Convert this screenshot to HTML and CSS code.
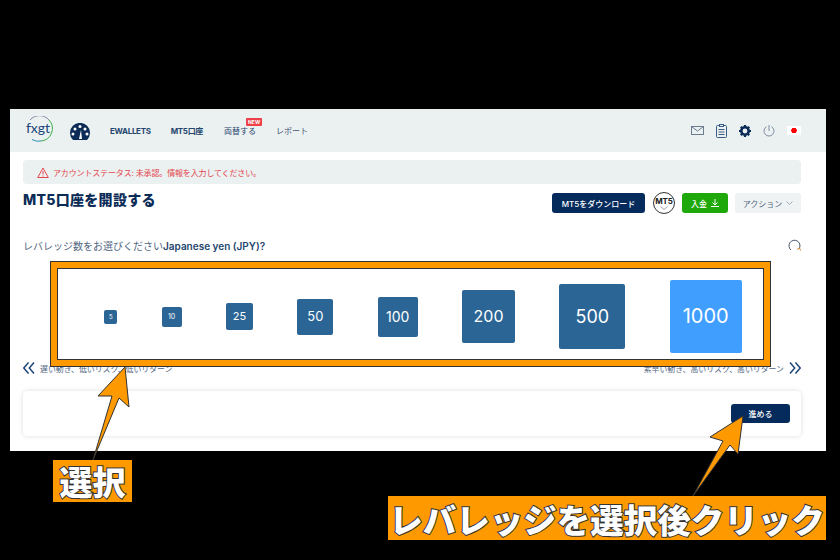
FILE: index.html
```html
<!DOCTYPE html>
<html lang="ja">

<head>
    <meta charset="UTF-8">
    <meta name="viewport" content="width=device-width, initial-scale=1.0">
    <title>MT5口座を開設する</title>
    <link rel="stylesheet" href="styles.css">
</head>

<body>
    <div class="page">
        <header class="nav">
            <div class="logo">
                <svg class="logo-ring" width="28" height="26" viewBox="0 0 28 26" fill="none">
                    <path d="M5 4A12.500 12.500 0 0 1 24 4" stroke="#7f8fa6" stroke-width="1"/>
                    <path d="M24 4A12.500 12.500 0 0 1 16 25" stroke="#3fae49" stroke-width="1"/>
                    <path d="M16 25A12.500 12.500 0 0 1 7 23.500" stroke="#2a8fb8" stroke-width="1"/>
                </svg>
                <span class="logo-text">fxgt</span>
            </div>
            <svg class="gauge" width="20" height="17" viewBox="0 0 20 17">
                <path d="M3 17A10 10 0 1 1 17 17Z" fill="#0b2c56"/>
                <circle cx="10" cy="3.500" r="1.500" fill="#fff"/>
                <circle cx="5" cy="6" r="1.500" fill="#fff"/>
                <circle cx="15" cy="6" r="1.500" fill="#fff"/>
                <circle cx="3" cy="11" r="1.500" fill="#fff"/>
                <circle cx="17" cy="11" r="1.500" fill="#fff"/>
                <path d="M9 16L11 7L12 16Z" fill="#fff"/>
            </svg>
            <a class="nav-link nav-bold" href="#">EWALLETS</a>
            <a class="nav-link nav-bold" href="#">MT5口座</a>
            <a class="nav-link nav-new" href="#">両替する<span class="badge">NEW</span></a>
            <a class="nav-link nav-light" href="#">レポート</a>
            <div class="nav-icons">
                <svg width="13" height="9" viewBox="0 0 13 9" fill="none" stroke="#6b7c90">
                    <rect x="0.500" y="0.500" width="12" height="8"/>
                    <path d="M0.500 0.500L6.500 5L12.500 0.500"/>
                </svg>
                <svg width="11" height="14" viewBox="0 0 11 14" fill="none" stroke="#3a5d85">
                    <rect x="0.500" y="1.500" width="10" height="12" rx="1"/>
                    <rect x="3.500" y="0.500" width="4" height="2" fill="#ebf0f0"/>
                    <path d="M2.500 5.500H8.500M2.500 8H8.500M2.500 10.500H8.500"/>
                </svg>
                <svg width="12" height="12" viewBox="0 0 12 12">
                    <circle cx="6" cy="6" r="3.700" fill="none" stroke="#0b2c56" stroke-width="2.600"/>
                    <path d="M6 0V2M6 10V12M0 6H2M10 6H12M1.800 1.800L3.200 3.200M8.800 8.800L10.200 10.200M1.800 10.200L3.200 8.800M8.800 3.200L10.200 1.800" stroke="#0b2c56" stroke-width="2.200"/>
                </svg>
                <svg width="12" height="12" viewBox="0 0 12 12" fill="none" stroke="#7f90a2">
                    <path d="M3.500 1.700A5 5 0 1 0 8.500 1.700"/>
                    <path d="M6 0V6"/>
                </svg>
                <span class="flag"></span>
            </div>
        </header>

        <main class="content">
            <div class="alert">
                <svg width="12" height="11" viewBox="0 0 12 11" fill="none" stroke="#e4464e">
                    <path d="M6 1L11.300 10.500H0.700Z"/>
                    <path d="M6 4V7.500M6 8.500V9.500"/>
                </svg>
                <span>アカウントステータス: 未承認。情報を入力してください。</span>
            </div>

            <div class="title-row">
                <h1>MT5口座を開設する</h1>
                <div class="actions">
                    <button class="btn btn-navy btn-download">MT5をダウンロード</button>
                    <div class="mt5-circle">
                        <span>MT5</span>
                        <svg width="8" height="4" viewBox="0 0 8 4" fill="none" stroke="#9aa5b1"><path d="M0.500 0.500L4 3.500L7.500 0.500"/></svg>
                    </div>
                    <button class="btn btn-green">入金
                        <svg width="8" height="8" viewBox="0 0 8 8" fill="none" stroke="#fff"><path d="M4 0V5.500M1.500 3.500L4 6L6.500 3.500M0 7.500H8"/></svg>
                    </button>
                    <button class="btn btn-gray">アクション
                        <svg width="7" height="4" viewBox="0 0 7 4" fill="none" stroke="#a5b0ba"><path d="M0.500 0.500L3.500 3.500L6.500 0.500"/></svg>
                    </button>
                </div>
            </div>

            <div class="question">
                <p>レバレッジ数をお選びください<b>Japanese yen (JPY)?</b></p>
                <svg width="13" height="13" viewBox="0 0 13 13" fill="none" stroke="#44566c">
                    <path d="M11.500 9A5.500 5.500 0 1 0 3 11"/>
                    <path d="M9 10.500L11.500 9L12.500 11.500" stroke="#c9852f"/>
                </svg>
            </div>

            <div class="leverage">
                <button class="lev lev-5">5</button>
                <button class="lev lev-10">10</button>
                <button class="lev lev-25">25</button>
                <button class="lev lev-50">50</button>
                <button class="lev lev-100">100</button>
                <button class="lev lev-200">200</button>
                <button class="lev lev-500">500</button>
                <button class="lev lev-1000 active">1000</button>
            </div>

            <div class="hints">
                <div class="hint">
                    <svg width="12" height="12" viewBox="0 0 12 12" fill="none" stroke="#20467a" stroke-width="1.500"><path d="M5.500 0.500L0.800 6L5.500 11.500M11 0.500L6.300 6L11 11.500"/></svg>
                    <span>遅い動き、低いリスク、低いリターン</span>
                </div>
                <div class="hint">
                    <span>素早い動き、高いリスク、高いリターン</span>
                    <svg width="12" height="12" viewBox="0 0 12 12" fill="none" stroke="#20467a" stroke-width="1.500"><path d="M1 0.500L5.700 6L1 11.500M6.500 0.500L11.200 6L6.500 11.500"/></svg>
                </div>
            </div>

            <div class="card">
                <button class="btn btn-navy btn-next">進める</button>
            </div>
        </main>
    </div>

    <!-- annotations on top of the screenshot -->
    <div class="frame"></div>
    <svg class="arrows" width="840" height="560" viewBox="0 0 840 560">
        <path d="M125 367L129 407L119 398L93 460L112 396L98 396Z" fill="#ff9900" stroke="#333" stroke-width="1"/>
        <path d="M743 416L738 454L730 445L693 496L723 441L710 437Z" fill="#ff9900" stroke="#333" stroke-width="1"/>
    </svg>
    <div class="label label-select">選択</div>
    <div class="label label-click">レバレッジを選択後クリック</div>
</body>

</html>
```

FILE: styles.css
```css
* {
    box-sizing: border-box;
}

html,
body {
    margin: 0;
    padding: 0;
}

body {
    position: relative;
    width: 840px;
    height: 560px;
    overflow: hidden;
    background: #000;
    font-family: 'Inter', 'Noto Sans CJK JP', sans-serif;
    color: #0b2c56;
}

button {
    border: none;
    font-family: inherit;
    padding: 0;
}

.page {
    width: 816px;
    height: 342px;
    margin: 109px 0 0 10px;
    background: #fff;
}

/* nav */
.nav {
    height: 43px;
    background: #ebf0f0;
    display: flex;
    align-items: center;
    padding-left: 15px;
}

.logo {
    position: relative;
    width: 28px;
    height: 26px;
    margin-top: -3px;
    display: flex;
    align-items: center;
    justify-content: center;
}

.logo-ring {
    position: absolute;
    left: 0;
    top: 0;
}

.logo-text {
    font-family: 'Lato', sans-serif;
    font-size: 14px;
    color: #20467a;
    margin-left: -2px;
    margin-top: -3px;
}

.gauge {
    margin-left: 17px;
    margin-right: 20px;
    margin-top: 2px;
}

.nav-link {
    font-size: 8px;
    text-decoration: none;
    color: #24466e;
    margin-right: 20px;
    white-space: nowrap;
}

.nav-bold {
    font-weight: 700;
    letter-spacing: -0.3px;
}

.nav-new {
    position: relative;
    font-weight: 400;
    margin-left: 1px;
}

.nav-light {
    font-weight: 400;
    color: #3f5571;
}

.badge {
    position: absolute;
    left: 22px;
    top: -7px;
    background: #ed4048;
    color: #fff;
    font-size: 5px;
    font-weight: 700;
    line-height: 8px;
    padding: 0 2px;
    border-radius: 1px;
}

.nav-icons {
    margin-left: auto;
    display: flex;
    align-items: center;
    gap: 12px;
    padding-right: 25px;
}

.flag {
    width: 14px;
    height: 9px;
    background: radial-gradient(circle, #f00 0 2.500px, #fff 3px);
}

/* main */
.content {
    padding: 8px 25px 0 13px;
}

.alert {
    height: 24px;
    background: #ebf0f0;
    border-radius: 4px;
    display: flex;
    align-items: center;
    gap: 4px;
    padding-left: 14px;
    font-size: 8px;
    letter-spacing: -0.15px;
    color: #e4464e;
}

.title-row {
    display: flex;
    justify-content: space-between;
    align-items: flex-start;
    margin-top: 8px;
    height: 22px;
}

h1 {
    margin: 0;
    font-size: 14px;
    line-height: 16px;
    font-weight: 800;
    letter-spacing: 0.3px;
    color: #0b2c56;
}

.actions {
    display: flex;
    align-items: center;
    height: 22px;
}

.btn {
    height: 20px;
    border-radius: 3px;
    font-size: 8px;
    font-weight: 500;
    display: flex;
    align-items: center;
    justify-content: center;
    gap: 4px;
}

.btn-navy {
    background: #042b5c;
    color: #fff;
}

.btn-download {
    width: 93px;
}

.mt5-circle {
    width: 22px;
    height: 22px;
    margin: 0 7px 0 8px;
    border: 1px solid #333;
    border-radius: 50%;
    font-size: 8px;
    font-weight: 700;
    color: #222;
    letter-spacing: -0.2px;
    display: flex;
    flex-direction: column;
    align-items: center;
    justify-content: center;
    line-height: 9px;
    padding-top: 1px;
}

.btn-green {
    width: 46px;
    background: #1fa80a;
    color: #fff;
}

.btn-gray {
    width: 66px;
    margin-left: 7px;
    background: #eff3f3;
    color: #51667f;
    font-weight: 400;
}

.question {
    display: flex;
    justify-content: space-between;
    align-items: center;
    height: 16px;
    margin-top: 23px;
    font-size: 10px;
    color: #51667f;
}

.question p {
    margin: 0;
}

.question b {
    color: #24466e;
    font-weight: 600;
}

.leverage {
    display: flex;
    align-items: center;
    gap: 44.350px;
    height: 73px;
    margin-top: 27px;
    padding-left: 81.300px;
}

.lev {
    background: #2b6595;
    color: #fff;
    border-radius: 2px;
    flex-shrink: 0;
    display: flex;
    align-items: center;
    justify-content: center;
    padding-bottom: 1px;
}

.lev-5 { width: 13px; height: 14px; font-size: 6px; border-radius: 2px; }
.lev-10 { width: 20px; height: 20px; font-size: 7px; }
.lev-25 { width: 27px; height: 27px; font-size: 11px; }
.lev-50 { width: 36px; height: 36px; font-size: 13px; }
.lev-100 { width: 40px; height: 40px; font-size: 14px; }
.lev-200 { width: 53px; height: 53px; font-size: 16px; }
.lev-500 { width: 66px; height: 65px; font-size: 18px; }
.lev-1000 { width: 72px; height: 73px; font-size: 20px; }

.lev.active {
    background: #409eff;
}

.hints {
    display: flex;
    justify-content: space-between;
    height: 14px;
    margin-top: 8px;
    font-size: 7.900px;
    color: #51667f;
}

.hint {
    display: flex;
    align-items: center;
    gap: 5px;
}

.card {
    height: 45px;
    margin-top: 16px;
    background: #fff;
    border-radius: 4px;
    box-shadow: 0 0 5px rgba(0, 0, 0, 0.14);
    display: flex;
    align-items: center;
    justify-content: flex-end;
    padding-right: 11px;
}

.btn-next {
    width: 59px;
    height: 19px;
}

/* annotations */
.frame {
    position: absolute;
    left: 50px;
    top: 261px;
    width: 721px;
    height: 106px;
    background: transparent;
    border: 7px solid #ff9900;
    outline: 1px solid #333;
    outline-offset: -1px;
    box-shadow: inset 0 0 0 1px #333;
}

.arrows {
    position: absolute;
    left: 0;
    top: 0;
}

.label {
    position: absolute;
    background: #ff9900;
    color: #fff;
    font-family: 'Noto Sans CJK JP', sans-serif;
    font-weight: 900;
    white-space: nowrap;
    display: flex;
    align-items: center;
    justify-content: center;
    -webkit-text-stroke: 2px #333;
    paint-order: stroke fill;
}

.label-select {
    left: 53px;
    top: 460px;
    width: 79px;
    height: 42px;
    font-size: 33px;
}

.label-click {
    left: 388px;
    top: 496px;
    width: 438px;
    height: 44px;
    font-size: 33.500px;
}
```
